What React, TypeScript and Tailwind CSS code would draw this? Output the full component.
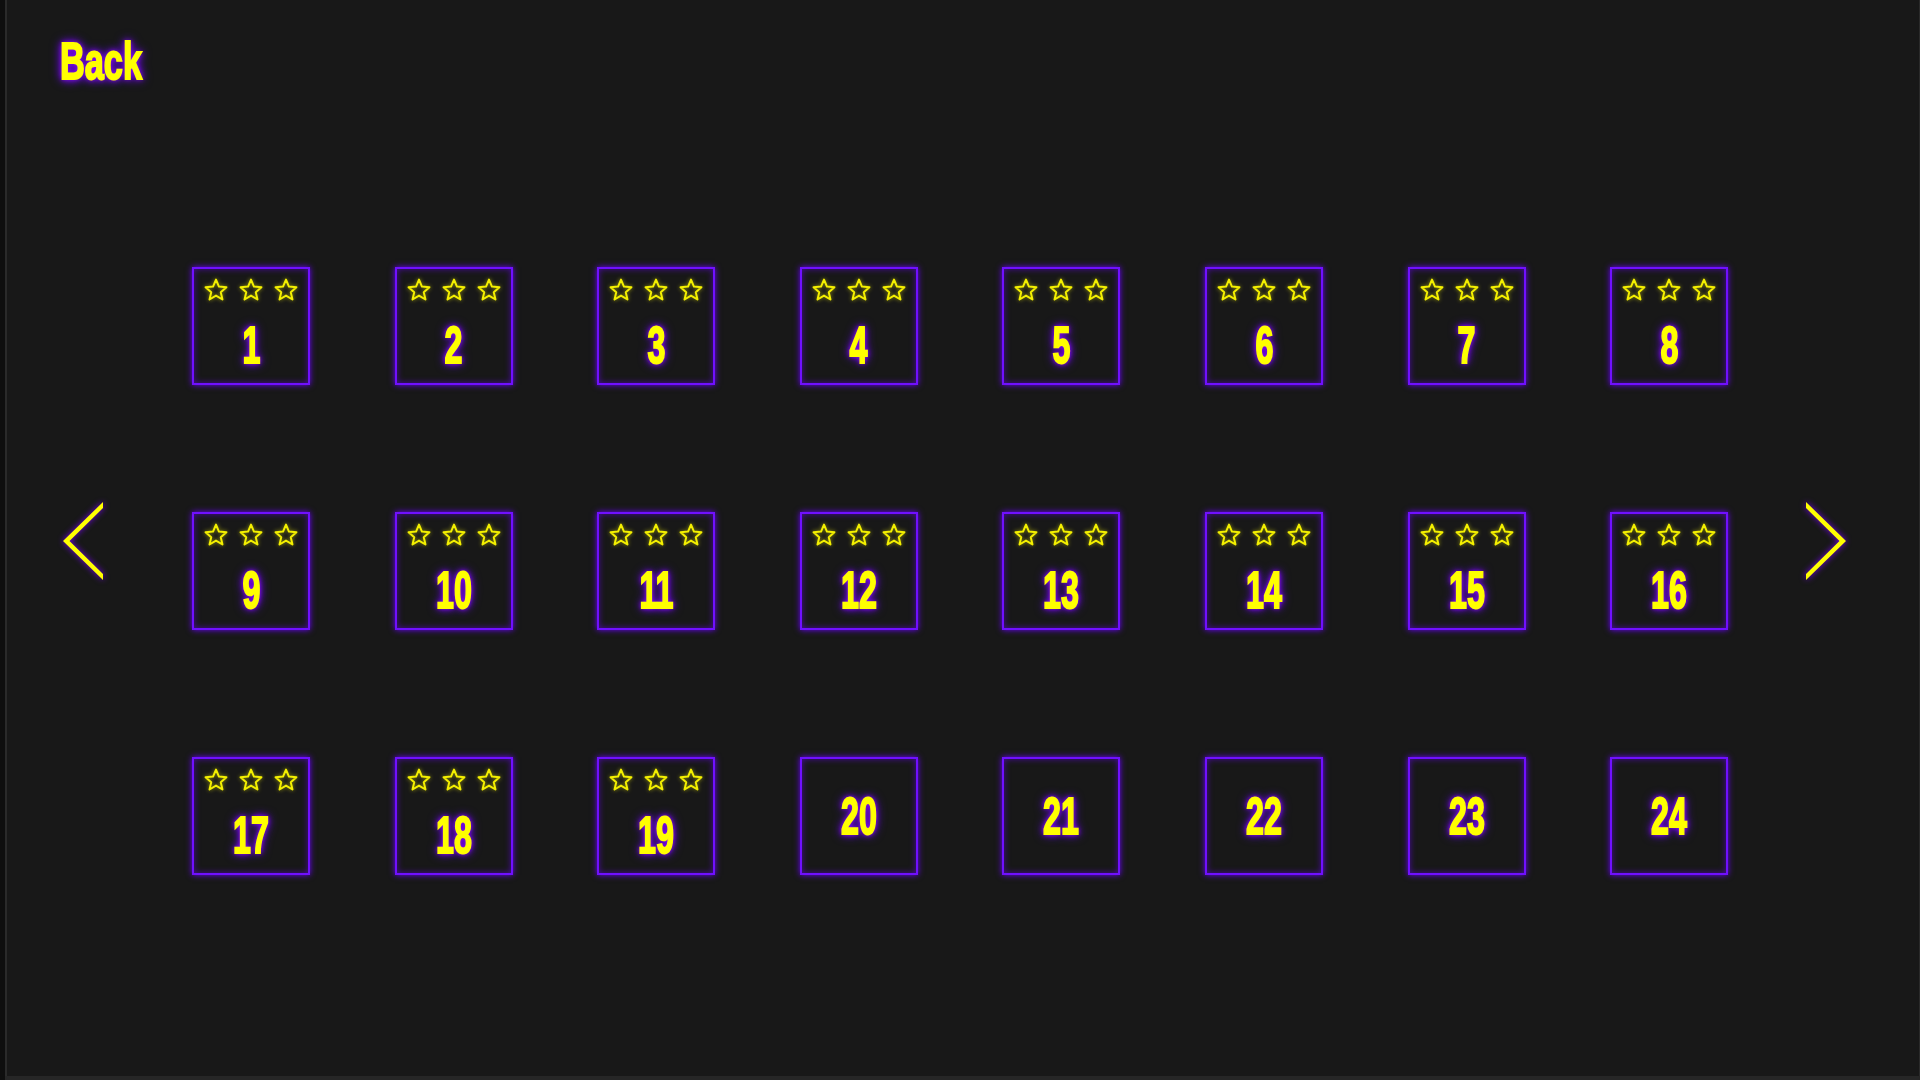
import React from "react";

const FONT = "font-['Liberation_Sans',Arial,sans-serif]";

function Star() {
  return (
    <svg width="24" height="23" viewBox="0 0 24 23" className="drop-shadow-[0_0_2px_rgba(255,255,0,0.55)]">
      <polygon
        points="12,1.6 14.94,8.55 22.46,9.2 16.76,14.15 18.47,21.5 12,17.6 5.53,21.5 7.24,14.15 1.54,9.2 9.06,8.55"
        fill="none"
        stroke="#f4f000"
        strokeWidth="2"
        strokeLinejoin="round"
      />
    </svg>
  );
}

function Num({ n }: { n: number }) {
  return (
    <div
      className={`${FONT} font-bold text-[52px] leading-none text-[#ffff00] scale-x-[0.62] [-webkit-text-stroke:2px_#ffff00] [text-shadow:0_0_6px_#9010ff,0_0_10px_#7a00ff,0_0_14px_#6a00ff]`}
    >
      {n}
    </div>
  );
}

function Card({ n, stars }: { n: number; stars: boolean }) {
  return (
    <div
      className={`w-[118px] h-[118px] border-2 border-[#7010ff] shadow-[0_0_6px_#6a00ff,inset_0_0_6px_rgba(106,0,255,0.6)] flex flex-col items-center ${
        stars ? "" : "justify-center"
      }`}
    >
      {stars && (
        <div className="mt-[9px] flex gap-[11px]">
          <Star />
          <Star />
          <Star />
        </div>
      )}
      <div className={stars ? "mt-[18px]" : ""}>
        <Num n={n} />
      </div>
    </div>
  );
}

function LeftArrow() {
  return (
    <svg width="40" height="80" viewBox="0 0 40 80" className="drop-shadow-[0_0_3px_#7a00ff]">
      <polygon points="40,1 0,40 40,79 40,73 6.5,40 40,7" fill="#ffff00" />
    </svg>
  );
}

function RightArrow() {
  return (
    <svg width="40" height="80" viewBox="0 0 40 80" className="drop-shadow-[0_0_3px_#7a00ff]">
      <polygon points="0,1 40,40 0,79 0,73 33.5,40 0,7" fill="#ffff00" />
    </svg>
  );
}

export default function App() {
  const cards = Array.from({ length: 24 }, (_, i) => i + 1);
  return (
    <div className="w-[1920px] h-[1080px] bg-[#181818] flex flex-col overflow-hidden">
      <div className="flex flex-1 min-h-0">
        <div className="w-[5px] bg-[#0e0e0e]" />
        <div className="w-[2px] bg-[#2a2a2a]" />
        <div className="flex-1 flex flex-col">
          <div className="pl-[53px] pt-[35px] h-[267px]">
            <div
              className={`${FONT} font-bold text-[52px] leading-none text-[#ffff00] scale-x-[0.66] origin-left [-webkit-text-stroke:2px_#ffff00] [text-shadow:0_0_6px_#9010ff,0_0_10px_#7a00ff,0_0_14px_#6a00ff]`}
            >
              Back
            </div>
          </div>
          <div className="flex items-start pl-[56px]">
            <div className="mt-[234px]">
              <LeftArrow />
            </div>
            <div className="ml-[89px] grid grid-cols-[repeat(8,118px)] gap-x-[84.6px] gap-y-[127px]">
              {cards.map((n) => (
                <Card key={n} n={n} stars={n <= 19} />
              ))}
            </div>
            <div className="ml-[78px] mt-[234px]">
              <RightArrow />
            </div>
          </div>
        </div>
        <div className="w-[1px] bg-[#2a2a2a]" />
      </div>
      <div className="flex h-[4px]">
        <div className="w-[5px] bg-[#0e0e0e]" />
        <div className="flex-1 bg-[#262626]" />
      </div>
    </div>
  );
}
